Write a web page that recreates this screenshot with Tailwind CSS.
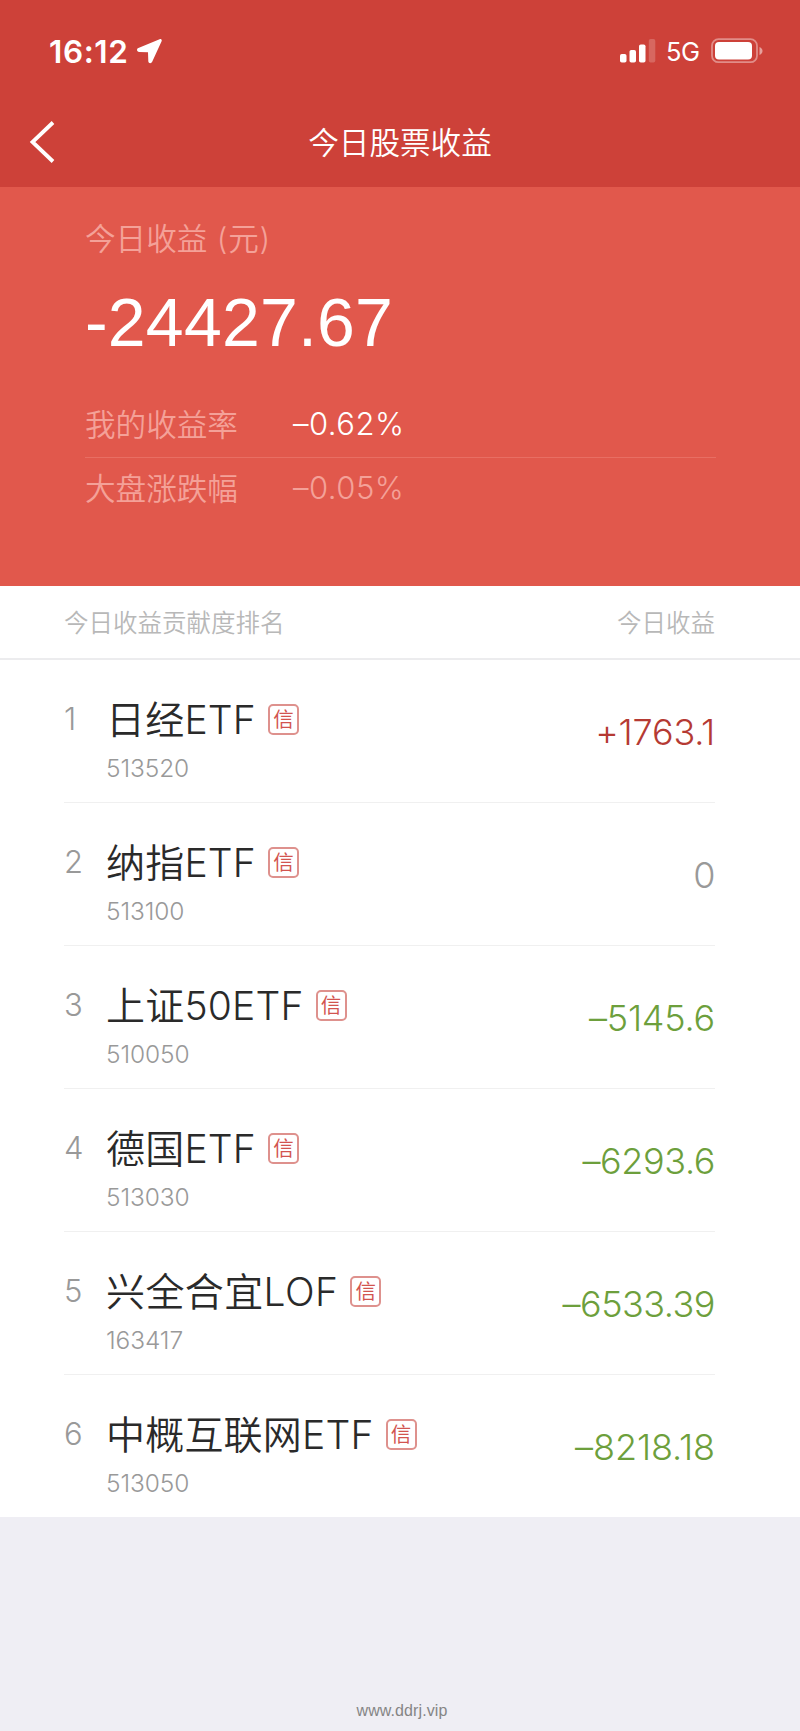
<!DOCTYPE html>
<html lang="zh-CN">
<head>
    <meta charset="UTF-8">
    <meta name="viewport" content="width=device-width, initial-scale=1.0">
    <title>今日股票收益</title>
    <script src="https://cdn.jsdelivr.net/npm/@tailwindcss/browser@4"></script>
</head>
<body class="min-h-screen bg-[#efeef4] font-['Inter','Noto_Sans_CJK_SC',sans-serif]">
    <div class="w-[800px] h-[1731px] flex flex-col overflow-hidden">
        <header class="h-[187px] bg-[#cd4139] text-white">
            <!-- Status bar -->
            <div class="h-[102px] pl-[49px] pr-[37px] flex items-center justify-between">
                <div class="flex items-center">
                    <span class="mt-[2px] text-[31.500px] leading-[34px] font-semibold tracking-[0.6px] w-[88px] whitespace-nowrap">16:12</span>
                    <svg class="w-[26px] h-[26px]" viewBox="0 0 26 26" fill="currentColor"><path d="M22.600 1.200 1.400 10c-2.200 1-1.600 3.800.8 3.900l8.800.3.3 9c.1 2.300 3 2.700 3.900.6L24.600 3.200c.6-1.400-.6-2.600-2-2z"/></svg>
                </div>
                <div class="flex items-center">
                    <svg class="w-[36px] h-[24px]" viewBox="0 0 36 24" fill="currentColor">
                        <rect x="0" y="15" width="6.500" height="8.500" rx="1.800"/>
                        <rect x="9.500" y="11" width="6.500" height="12.500" rx="1.800"/>
                        <rect x="19" y="5.500" width="6.500" height="18" rx="1.800"/>
                        <rect x="28.800" y="0" width="6.500" height="23.500" rx="1.800" opacity=".2"/>
                    </svg>
                    <span class="ml-[10px] mt-[2px] w-[35px] text-[25.500px] leading-[30px] tracking-[-0.5px] whitespace-nowrap">5G</span>
                    <svg class="ml-[10px] w-[52px] h-[26px]" viewBox="0 0 52 26" fill="currentColor">
                        <rect x="1" y="1.200" width="45" height="23" rx="6.500" fill="none" stroke="currentColor" stroke-width="1.800" opacity=".4"/>
                        <rect x="4" y="4" width="37" height="17.500" rx="4"/>
                        <path d="M48.500 9c4 1.500 4 6.500 0 8z" opacity=".5"/>
                    </svg>
                </div>
            </div>
            <!-- Nav bar -->
            <div class="h-[81px] grid grid-cols-[100px_1fr_100px] items-center">
                <svg class="ml-[29px] -mt-[2px] w-[26px] h-[42px]" viewBox="0 0 26 42" fill="none" stroke="currentColor" stroke-width="3.800"><path d="M24 1.500 3.500 21 24 40.500"/></svg>
                <h1 class="text-center text-[30.600px] leading-[40px] font-[350]">今日股票收益</h1>
            </div>
        </header>

        <!-- Summary -->
        <section class="h-[399px] bg-[#e1584c] pl-[85px] pr-[84px] pt-[31px] text-[#f4a198] font-[350]">
            <div class="text-[30.600px] leading-[42px]">今日收益<span class="tracking-[0.8px]"> (元)</span></div>
            <div class="mt-[19px] h-[86px] text-[68px] leading-[86px] tracking-[0.2px] text-white font-normal font-['Liberation_Sans',sans-serif]">-24427.67</div>
            <div class="mt-[27px] h-[66px] pt-[12px] flex border-b border-[#e86e63] text-[30.600px] leading-[42px]">
                <span class="w-[208px]">我的收益率</span>
                <span class="-mt-[1px] text-white text-[31px] tracking-[0.5px]">–0.62%</span>
            </div>
            <div class="pt-[10px] flex text-[30.600px] leading-[42px]">
                <span class="w-[208px]">大盘涨跌幅</span>
                <span class="-mt-[1px] text-[31px] tracking-[0.5px]">–0.05%</span>
            </div>
        </section>

        <!-- Table head -->
        <div class="h-[74px] bg-white border-b-2 border-[#ececee] pl-[64px] pr-[85px] pt-[1px] flex items-center justify-between text-[24.500px] leading-[36px] font-[350] text-[#b8b8b8]">
            <span>今日收益贡献度排名</span>
            <span>今日收益</span>
        </div>

        <!-- Ranking -->
        <ul class="h-[857px] bg-white pl-[64px] pr-[85px] font-light">
            <li class="h-[143px] flex border-b border-[#f0f0f0]">
                <span class="w-[42px] pt-[39px] text-[31px] leading-[40px] text-[#999]">1</span>
                <div class="flex-1">
                    <div class="pt-[35px] h-[86px] flex">
                        <span class="text-[39px] leading-[50px] tracking-[0.2px] text-[#2a2a2a] font-[350]">日经ETF</span>
                        <span class="ml-[12px] mt-[9px] w-[31px] h-[31px] border-2 border-[#de918d] rounded-[5px] text-center text-[20.500px] leading-[28px] font-normal text-[#d2544f]">信</span>
                    </div>
                    <div class="text-[24.500px] leading-[44px] tracking-[-0.1px] text-[#999]">513520</div>
                </div>
                <span class="pt-[50px] text-[36px] leading-[44px] tracking-[-0.2px] text-[#b53a33] font-[350]">+1763.1</span>
            </li>
            <li class="h-[143px] flex border-b border-[#f0f0f0]">
                <span class="w-[42px] pt-[39px] text-[31px] leading-[40px] text-[#999]">2</span>
                <div class="flex-1">
                    <div class="pt-[35px] h-[86px] flex">
                        <span class="text-[39px] leading-[50px] tracking-[0.2px] text-[#2a2a2a] font-[350]">纳指ETF</span>
                        <span class="ml-[12px] mt-[9px] w-[31px] h-[31px] border-2 border-[#de918d] rounded-[5px] text-center text-[20.500px] leading-[28px] font-normal text-[#d2544f]">信</span>
                    </div>
                    <div class="text-[24.500px] leading-[44px] tracking-[-0.1px] text-[#999]">513100</div>
                </div>
                <span class="pt-[50px] text-[36px] leading-[44px] tracking-[-0.5px] text-[#999]">0</span>
            </li>
            <li class="h-[143px] flex border-b border-[#f0f0f0]">
                <span class="w-[42px] pt-[39px] text-[31px] leading-[40px] text-[#999]">3</span>
                <div class="flex-1">
                    <div class="pt-[35px] h-[86px] flex">
                        <span class="text-[39px] leading-[50px] tracking-[0.2px] text-[#2a2a2a] font-[350]">上证50ETF</span>
                        <span class="ml-[12px] mt-[9px] w-[31px] h-[31px] border-2 border-[#de918d] rounded-[5px] text-center text-[20.500px] leading-[28px] font-normal text-[#d2544f]">信</span>
                    </div>
                    <div class="text-[24.500px] leading-[44px] tracking-[-0.1px] text-[#999]">510050</div>
                </div>
                <span class="pt-[50px] text-[36px] leading-[44px] tracking-[-0.2px] text-[#6d9f3c] font-[350]">–5145.6</span>
            </li>
            <li class="h-[143px] flex border-b border-[#f0f0f0]">
                <span class="w-[42px] pt-[39px] text-[31px] leading-[40px] text-[#999]">4</span>
                <div class="flex-1">
                    <div class="pt-[35px] h-[86px] flex">
                        <span class="text-[39px] leading-[50px] tracking-[0.2px] text-[#2a2a2a] font-[350]">德国ETF</span>
                        <span class="ml-[12px] mt-[9px] w-[31px] h-[31px] border-2 border-[#de918d] rounded-[5px] text-center text-[20.500px] leading-[28px] font-normal text-[#d2544f]">信</span>
                    </div>
                    <div class="text-[24.500px] leading-[44px] tracking-[-0.1px] text-[#999]">513030</div>
                </div>
                <span class="pt-[50px] text-[36px] leading-[44px] tracking-[-0.4px] text-[#6d9f3c] font-[350]">–6293.6</span>
            </li>
            <li class="h-[143px] flex border-b border-[#f0f0f0]">
                <span class="w-[42px] pt-[39px] text-[31px] leading-[40px] text-[#999]">5</span>
                <div class="flex-1">
                    <div class="pt-[35px] h-[86px] flex">
                        <span class="text-[39px] leading-[50px] tracking-[0.4px] text-[#2a2a2a] font-[350]">兴全合宜LOF</span>
                        <span class="ml-[12px] mt-[9px] w-[31px] h-[31px] border-2 border-[#de918d] rounded-[5px] text-center text-[20.500px] leading-[28px] font-normal text-[#d2544f]">信</span>
                    </div>
                    <div class="text-[24.500px] leading-[44px] tracking-[-0.1px] text-[#999]">163417</div>
                </div>
                <span class="pt-[50px] text-[36px] leading-[44px] tracking-[-0.5px] text-[#6d9f3c] font-[350]">–6533.39</span>
            </li>
            <li class="h-[142px] flex">
                <span class="w-[42px] pt-[39px] text-[31px] leading-[40px] text-[#999]">6</span>
                <div class="flex-1">
                    <div class="pt-[35px] h-[86px] flex">
                        <span class="text-[39px] leading-[50px] tracking-[0.2px] text-[#2a2a2a] font-[350]">中概互联网ETF</span>
                        <span class="ml-[12px] mt-[9px] w-[31px] h-[31px] border-2 border-[#de918d] rounded-[5px] text-center text-[20.500px] leading-[28px] font-normal text-[#d2544f]">信</span>
                    </div>
                    <div class="text-[24.500px] leading-[44px] tracking-[-0.1px] text-[#999]">513050</div>
                </div>
                <span class="pt-[50px] text-[36px] leading-[44px] tracking-[-0.1px] text-[#6d9f3c] font-[350]">–8218.18</span>
            </li>
        </ul>

        <footer class="mt-auto pb-[9px] pl-[4px] text-center text-[16px] leading-[22px] tracking-[0.1px] text-[#858585] font-['Liberation_Sans',sans-serif]">www.ddrj.vip</footer>
    </div>
</body>
</html>
